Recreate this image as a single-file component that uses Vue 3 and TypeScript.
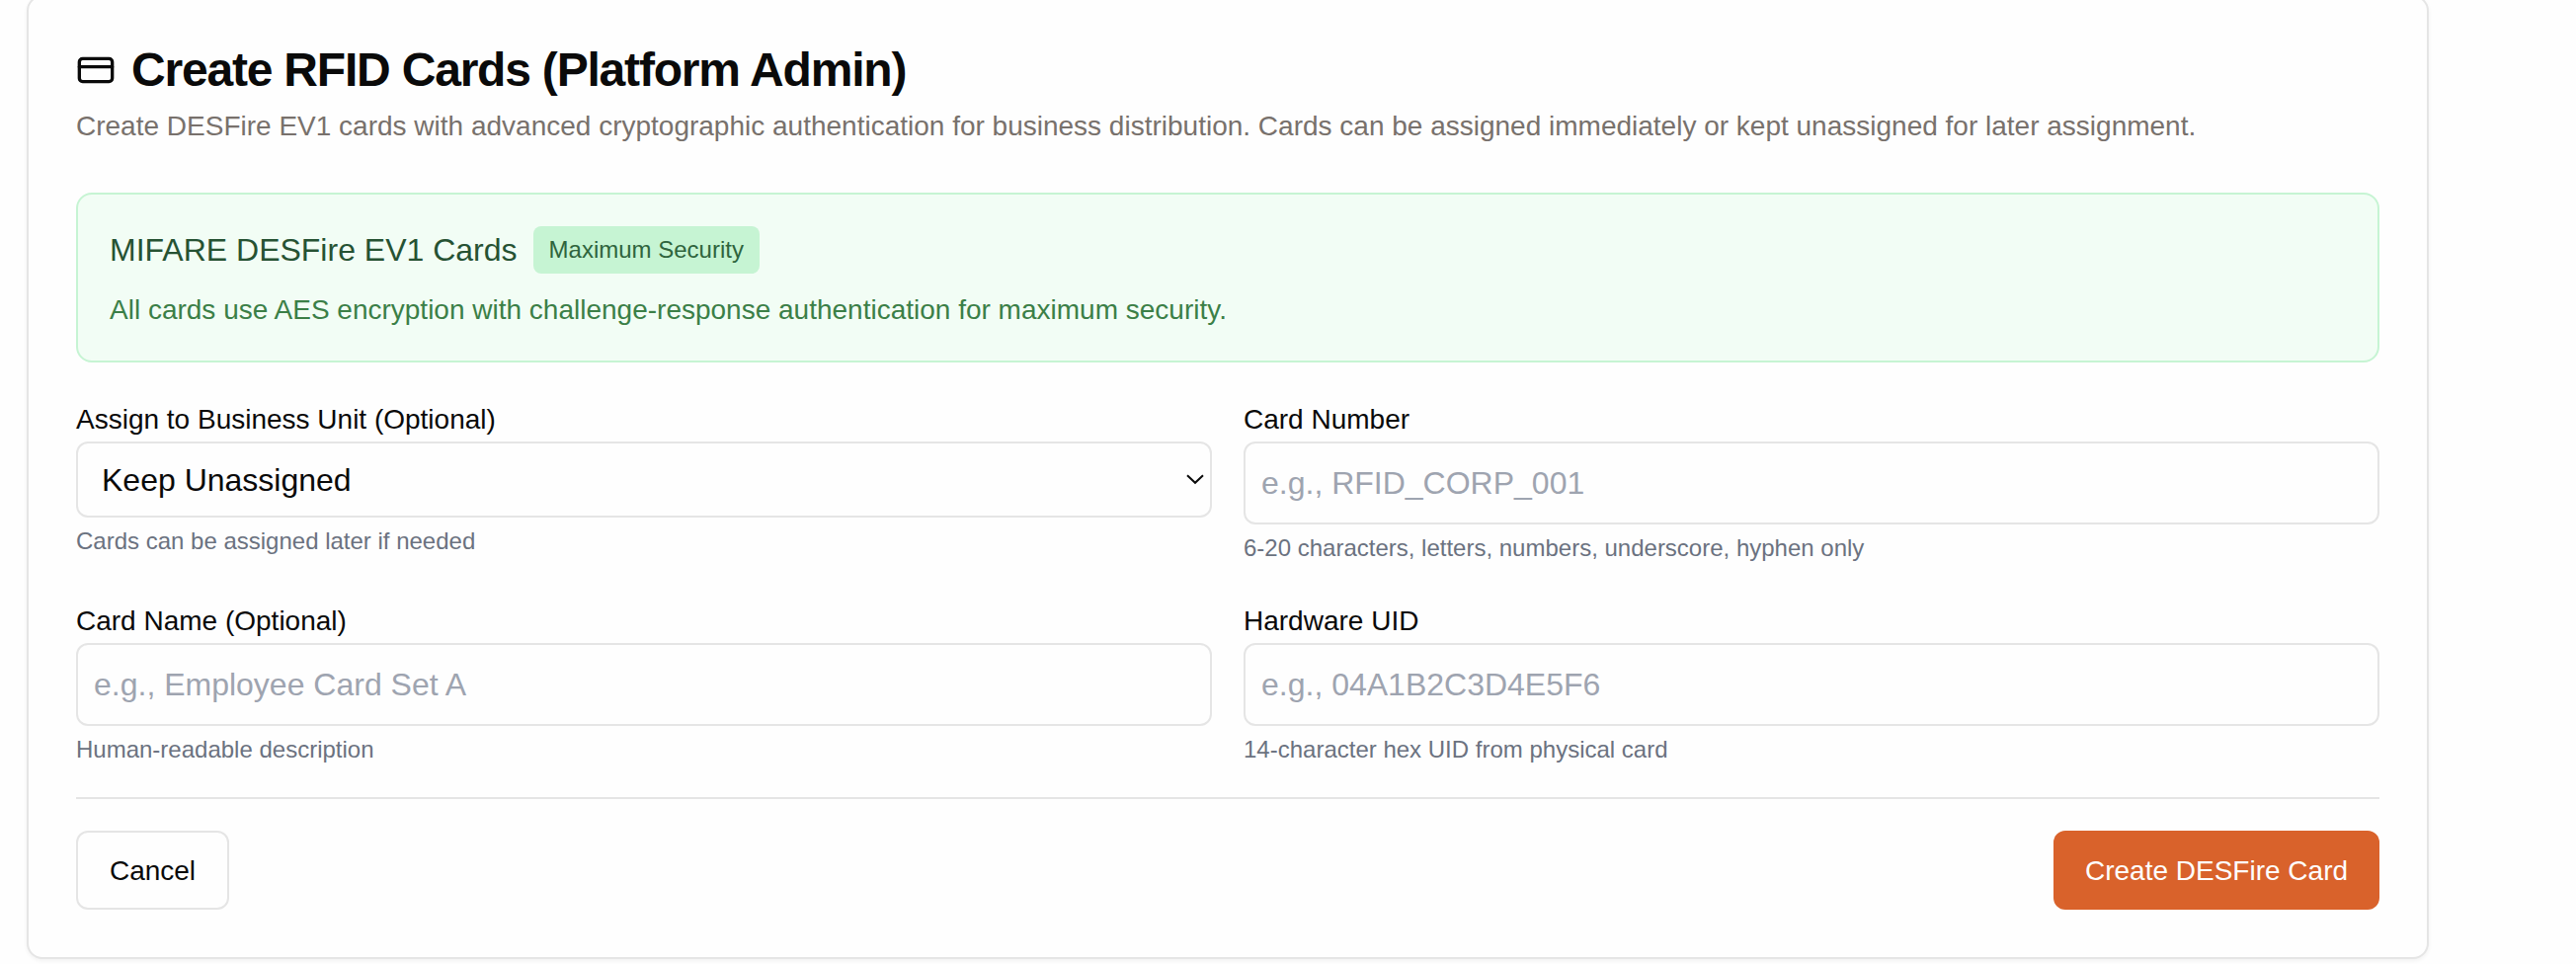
<script setup lang="ts">
import { ref } from 'vue'

interface Field {
  id: string
  label: string
  placeholder: string
  hint: string
}

const unit = ref('')
const fields: Field[] = [
  {
    id: 'card-number',
    label: 'Card Number',
    placeholder: 'e.g., RFID_CORP_001',
    hint: '6-20 characters, letters, numbers, underscore, hyphen only',
  },
  {
    id: 'card-name',
    label: 'Card Name (Optional)',
    placeholder: 'e.g., Employee Card Set A',
    hint: 'Human-readable description',
  },
  {
    id: 'hardware-uid',
    label: 'Hardware UID',
    placeholder: 'e.g., 04A1B2C3D4E5F6',
    hint: '14-character hex UID from physical card',
  },
]
</script>

<template>
  <main class="page">
    <section class="card">
      <header class="head">
        <h1 class="title">
          <svg class="title-icon" viewBox="0 0 24 24" fill="none" stroke="currentColor" stroke-width="2" stroke-linecap="round" stroke-linejoin="round">
            <rect x="2" y="5" width="20" height="14" rx="2" />
            <path d="M2 10h20" />
          </svg>
          <span class="title-text">Create RFID Cards (Platform Admin)</span>
        </h1>
        <p class="desc">Create DESFire EV1 cards with advanced cryptographic authentication for business distribution. Cards can be assigned immediately or kept unassigned for later assignment.</p>
      </header>

      <div class="notice">
        <div class="notice-row">
          <span class="notice-title">MIFARE DESFire EV1 Cards</span>
          <span class="badge">Maximum Security</span>
        </div>
        <p class="notice-text">All cards use AES encryption with challenge-response authentication for maximum security.</p>
      </div>

      <form class="grid" @submit.prevent>
        <div class="field">
          <label class="label" for="unit">Assign to Business Unit (Optional)</label>
          <div class="select-wrap">
            <select id="unit" v-model="unit" class="select">
              <option value="">Keep Unassigned</option>
            </select>
            <svg class="chevron" viewBox="0 0 18 12" fill="none" stroke="currentColor" stroke-width="2">
              <path d="M1 1.2l8 7.6 8-7.6" />
            </svg>
          </div>
          <p class="hint">Cards can be assigned later if needed</p>
        </div>
        <div v-for="f in fields" :key="f.id" class="field">
          <label class="label" :for="f.id">{{ f.label }}</label>
          <input :id="f.id" class="input" type="text" :placeholder="f.placeholder" />
          <p class="hint">{{ f.hint }}</p>
        </div>
      </form>

      <footer class="actions">
        <button class="btn btn-outline" type="button">Cancel</button>
        <button class="btn btn-primary" type="button">Create DESFire Card</button>
      </footer>
    </section>
  </main>
</template>

<style>
html,
body {
  margin: 0;
  background: #fefefe;
  overflow: hidden;
}
</style>

<style scoped>
.page {
  box-sizing: border-box;
  height: 976px;
  padding-left: 27px;
  overflow: hidden;
  font-family: "Liberation Sans", Arial, sans-serif;
  color: #0a0a0a;
}
.page * {
  box-sizing: border-box;
}
.card {
  width: 2432px;
  height: 976px;
  margin-top: -5px;
  padding: 48px;
  border: 2px solid #e5e5e5;
  border-radius: 16px;
  background: #fefefe;
  box-shadow: 0 2px 4px rgba(0, 0, 0, 0.05);
}
.head {
  height: 150px;
  padding-top: 2px;
}
.title {
  display: flex;
  align-items: center;
  gap: 16px;
  height: 48px;
  margin: 0;
  font-size: 48px;
  line-height: 48px;
  font-weight: 700;
  letter-spacing: -1.2px;
  white-space: nowrap;
}
.title-icon {
  flex: none;
  width: 40px;
  height: 40px;
}
.desc {
  margin: 13px 0 0;
  font-size: 28px;
  line-height: 40px;
  color: #78716c;
  white-space: nowrap;
}
.notice {
  height: 172px;
  padding: 32px;
  border: 2px solid #c6f4d3;
  border-radius: 16px;
  background: #f2fdf5;
}
.notice-row {
  display: flex;
  align-items: center;
  gap: 16px;
  height: 48px;
}
.notice-title {
  font-size: 32px;
  line-height: 48px;
  color: #265233;
}
.badge {
  height: 48px;
  padding: 0 16px;
  border-radius: 8px;
  background: #c6f4d3;
  color: #2f643d;
  font-size: 24px;
  line-height: 48px;
}
.notice-text {
  margin: 17px 0 0;
  font-size: 28px;
  line-height: 40px;
  color: #3b7f47;
}
.grid {
  display: grid;
  grid-template-columns: 1fr 1fr;
  grid-auto-rows: 172px;
  gap: 32px;
  margin-top: 40px;
}
.field {
  display: flex;
  flex-direction: column;
}
.label {
  height: 40px;
  font-size: 28px;
  line-height: 36px;
}
.select-wrap {
  position: relative;
  height: 77px;
}
.select {
  width: 100%;
  height: 100%;
  padding: 0 24px;
  border: 2px solid #e5e5e5;
  border-radius: 12px;
  background: #fefefe;
  color: #0a0a0a;
  font: 32px "Liberation Sans", Arial, sans-serif;
  appearance: none;
}
.chevron {
  position: absolute;
  right: 8px;
  top: 33px;
  width: 18px;
  height: 12px;
}
.input {
  width: 100%;
  height: 84px;
  padding: 0 16px;
  border: 2px solid #e5e5e5;
  border-radius: 12px;
  background: #fefefe;
  font: 32px "Liberation Sans", Arial, sans-serif;
}
.input::placeholder {
  color: #9ea4b0;
  opacity: 1;
}
.hint {
  margin: 8px 0 0;
  font-size: 24px;
  line-height: 32px;
  color: #6b7280;
}
.actions {
  display: flex;
  justify-content: space-between;
  margin-top: 24px;
  padding-top: 32px;
  border-top: 2px solid #e5e5e5;
}
.btn {
  height: 80px;
  padding: 2px 0 0;
  border: 0;
  border-radius: 12px;
  font: 28px "Liberation Sans", Arial, sans-serif;
}
.btn-outline {
  width: 155px;
  border: 2px solid #e5e5e5;
  background: #fefefe;
  color: #0a0a0a;
}
.btn-primary {
  width: 330px;
  background: #d9622b;
  color: #fefefe;
}
</style>
